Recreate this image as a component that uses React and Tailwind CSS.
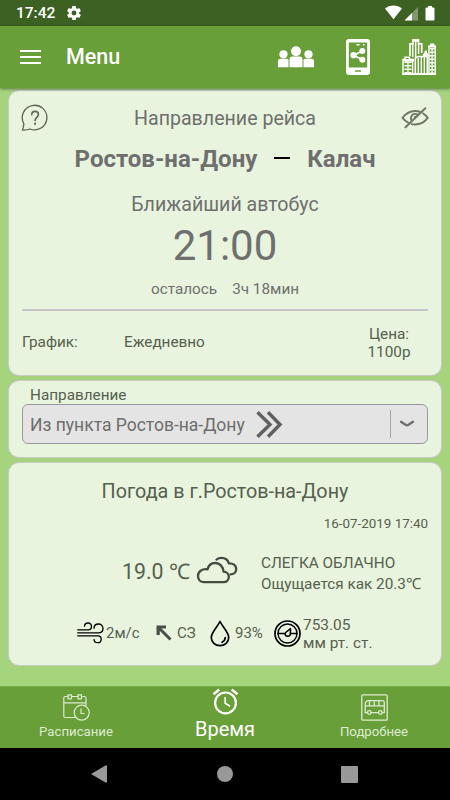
import React from "react";

const stroke = {
  fill: "none",
  stroke: "currentColor",
  strokeLinecap: "round",
  strokeLinejoin: "round",
};

/* ─── Icons ───────────────────────────────────────────── */

function GearIcon() {
  return (
    <svg className="-mt-[2px]" width="14" height="14" viewBox="2 2 20 20" fill="currentColor">
      <path d="M19.43 12.98c.04-.32.07-.64.07-.98s-.03-.66-.07-.98l2.11-1.65c.19-.15.24-.42.12-.64l-2-3.46c-.12-.22-.39-.3-.61-.22l-2.49 1c-.52-.4-1.08-.73-1.69-.98l-.38-2.65A.49.49 0 0 0 14 2h-4c-.25 0-.46.18-.49.42l-.38 2.65c-.61.25-1.17.59-1.69.98l-2.49-1c-.23-.09-.49 0-.61.22l-2 3.46c-.13.22-.07.49.12.64l2.11 1.65c-.04.32-.07.65-.07.98s.03.66.07.98l-2.11 1.65c-.19.15-.24.42-.12.64l2 3.46c.12.22.39.3.61.22l2.49-1c.52.4 1.08.73 1.69.98l.38 2.65c.03.24.24.42.49.42h4c.25 0 .46-.18.49-.42l.38-2.65c.61-.25 1.17-.59 1.69-.98l2.49 1c.23.09.49 0 .61-.22l2-3.46c.12-.22.07-.49-.12-.64l-2.11-1.65zM12 15.5a3.5 3.5 0 1 1 0-7 3.5 3.5 0 0 1 0 7z" />
    </svg>
  );
}

function StatusIcons() {
  return (
    <svg width="52" height="17" viewBox="0 0 52 17" fill="currentColor">
      <path d="M0 3.600C2.400 1.500 5.300.600 8.500.600s6.100.900 8.500 3L8.500 14.300z" />
      <path d="M19.500 15.500L33 2v13.500z" opacity=".35" />
      <path d="M19.500 15.500L27 8v7.500z" />
      <path d="M40.500 3.500q0-1 1-1h1.500V1h4v1.500h1.500q1 0 1 1v11q0 1-1 1h-7q-1 0-1-1z" />
    </svg>
  );
}

function PeopleIcon() {
  return (
    <svg width="36" height="22" viewBox="0 0 36 22" fill="currentColor">
      <circle cx="5.500" cy="8.300" r="4.100" />
      <circle cx="30.500" cy="8.300" r="4.100" />
      <path d="M0 21.200v-6.200q0-2.200 2.200-2.200h6.600q1.700 0 1.700 1.500v6.900z" />
      <path d="M36 21.200v-6.200q0-2.200-2.200-2.200h-6.600q-1.700 0-1.700 1.500v6.900z" />
      <circle cx="18" cy="5.200" r="5" />
      <path d="M11.500 21.200v-8q0-2.600 2.600-2.600h7.800q2.600 0 2.600 2.600v8z" />
    </svg>
  );
}

function PhoneShareIcon() {
  return (
    <svg width="24" height="36" viewBox="0 0 24 36">
      <rect width="24" height="36" rx="3" fill="#fff" />
      <rect x="2.800" y="3.500" width="18.400" height="25" fill="#689f38" />
      <path d="M10.500 5.700h3M17 5.700h1.500" stroke="#fff" strokeWidth="1.400" />
      <path d="M16.500 12L7.500 16.200L16.500 20.800" fill="none" stroke="#fff" strokeWidth="1.600" />
      <circle cx="16.300" cy="11.900" r="3" fill="#fff" />
      <circle cx="7.500" cy="16.200" r="3.100" fill="#fff" />
      <circle cx="16.300" cy="20.800" r="3" fill="#fff" />
      <path d="M9.500 32h5" stroke="#689f38" strokeWidth="1.300" strokeLinecap="round" />
    </svg>
  );
}

function CityIcon() {
  return (
    <svg width="34" height="36" viewBox="0 0 34 36" fill="none" stroke="#fff">
      <path d="M8 17V4.800h3V1h5.500v3.800H19.700V14" strokeWidth="1.700" />
      <path d="M10.800 5v13M13.700 1v18M16.600 5v10" strokeWidth="1.400" />
      <path d="M10.300 1.500h6.500" strokeWidth="2.400" />
      <path d="M27 35V7M33.200 7v28" strokeWidth="1.400" />
      <path d="M26.300 6.300h2V4.400h4v1.900h1.700v2.200h-7.700z" fill="#fff" stroke="none" />
      <path d="M30.100 9v26" strokeWidth="5" strokeDasharray="1.500 2" />
      <path d="M30.100 9v26" strokeWidth="1.200" />
      <path d="M13.300 35V19l3-1.500h9V35" strokeWidth="1.500" />
      <path d="M16.300 19v16M19.300 18v17M22.300 18v17" strokeWidth="1.300" />
      <path d="M21.500 17.500V15l1.500-1.200V12h1.500v1.800l1.500 1.200v2" fill="#fff" strokeWidth="1" />
      <path d="M1 35V20.500h2V18.300h4.500v2.200H12" strokeWidth="1.500" />
      <path d="M1 20h11v2.500H1z" fill="#fff" stroke="none" />
      <path d="M4 22.500v12.500M8 22.500v12.500" strokeWidth="3" strokeDasharray="1.500 2" />
      <path d="M6 22v13M10.600 22v13" strokeWidth="1.300" />
      <path d="M0 35h34" strokeWidth="1.800" />
    </svg>
  );
}

function HelpIcon() {
  return (
    <svg width="28" height="28" viewBox="0 0 28 28" strokeWidth="1.300" {...stroke}>
      <path d="M2.800 19.500A12.300 12.300 0 1 1 9 25c-2.400.9-4.800 1.200-7.600 1 .9-2 1.400-4.300 1.400-6.500z" />
      <path d="M10.800 10.800c0-2 1.400-3.400 3.200-3.400s3.400 1.300 3.400 3.200c0 2.800-3.300 2.900-3.300 6" strokeWidth="1.600" />
      <path d="M14.100 19.500v.5" strokeWidth="1.900" />
    </svg>
  );
}

function EyeOffIcon() {
  return (
    <svg width="28" height="22" viewBox="0 0 28 22" strokeWidth="1.900" {...stroke}>
      <path d="M7.500 15.800C4.800 14.500 2.900 12.700 1.500 10.900 4.500 6.900 8.800 4 14 4c2 0 3.800.4 5.400 1.200" />
      <path d="M22 6.300c1.800 1.200 3.400 2.800 4.700 4.600-3 4-7.400 6.600-12.700 6.600-1.200 0-2.300-.1-3.400-.4" />
      <path d="M10.300 12.900c-1.200-2.600.5-6 3.800-6 1 0 2 .4 2.600.9" />
      <path d="M4.500 20.300L24.300 1.300" strokeWidth="2" />
      <path d="M13.300 10.900c.1-.8.7-1.400 1.500-1.500" strokeWidth="1.200" />
    </svg>
  );
}

function CloudIcon() {
  return (
    <svg width="42" height="28" viewBox="0 0 42 28" strokeWidth="2.300" {...stroke}>
      <path d="M8 26.200h19.500c3.200 0 5.300-2.300 5.300-5.100 0-3-2.200-5.400-5.300-5.400-.4-5.200-3.800-8.700-8.200-8.700-4.200 0-6.800 2.600-7.700 6.300C5.800 12.600 2 15.500 2 20c0 3.500 2.500 6.200 6 6.200z" />
      <path d="M20.500 3.600c1.300-1.100 3-1.700 4.900-1.700 3.700 0 6.500 2 7.500 5.500 4.200-.2 7.300 1.800 7.300 5.500 0 3.400-2.500 5.500-5.700 5.500" />
    </svg>
  );
}

function WindIcon() {
  return (
    <svg width="27" height="22" viewBox="0 0 27 22" strokeWidth="1.300" {...stroke}>
      <path d="M.7 7.800h10.500c2 0 3.300-1.400 3.300-3.400s-1.400-3.400-3.400-3.400c-2.200 0-3.600 1.300-3.600 3.300" />
      <path d="M.7 10.800h20.500c2.900 0 4.800-1.700 4.800-4.300S24 2 21.500 2s-4.500 1.700-4.500 4.300" />
      <path d="M.7 13.800h20.300c2 0 3.200 1.500 3.200 3.400s-1.400 3.500-3.500 3.500-3.600-1.300-3.600-3.200" />
    </svg>
  );
}

function ArrowIcon() {
  return (
    <svg width="16" height="16" viewBox="0 0 16 16">
      <path d="M3 3L14.500 14.500" fill="none" stroke="currentColor" strokeWidth="3" />
      <path d="M.5.500h9.500v3H3.800v6.500H.5z" fill="currentColor" />
    </svg>
  );
}

function DropIcon() {
  return (
    <svg width="20" height="27" viewBox="0 0 20 27" strokeWidth="1.700" {...stroke}>
      <path d="M10 1.500C7.300 7 1.300 12 1.300 17.500c0 4.700 3.800 8.200 8.700 8.200s8.700-3.500 8.700-8.200C18.700 12 12.700 7 10 1.500z" />
      <path d="M15.300 17.500c-.1 2.300-1.300 3.900-3.300 4.700" />
    </svg>
  );
}

function GaugeIcon() {
  return (
    <svg width="27" height="27" viewBox="0 0 27 27" strokeWidth="1.700" {...stroke}>
      <circle cx="13.500" cy="13.500" r="12.500" />
      <circle cx="13.500" cy="13.500" r="9.500" strokeWidth="1.400" />
      <path d="M4 13.500h6.500M16.500 13.500H23" />
      <path d="M16.500 8.500l-.1 5.500c-.3 3-4.700 3-5.400.3-.2-2 1.500-2.600 2.600-3.300z" strokeWidth="1.500" />
    </svg>
  );
}

function ScheduleIcon() {
  return (
    <svg width="27" height="27" viewBox="0 0 27 27" strokeWidth="1.200" {...stroke}>
      <path d="M12 23.500H2.300q-1.500 0-1.500-1.500V4q0-1.500 1.500-1.500H5M8.500 2.500h6.300M18.500 2.500h3q1.500 0 1.500 1.500v7.500M1 8.800h22" />
      <rect x="5" y=".8" width="3.500" height="4" />
      <rect x="15" y=".8" width="3.500" height="4" />
      <circle cx="18.700" cy="18.700" r="7.500" />
      <path d="M18 14.800v4.700h3.200" />
    </svg>
  );
}

function ClockIcon() {
  return (
    <svg width="27" height="27" viewBox="0 0 27 27" strokeWidth="2.200" {...stroke} strokeLinecap="butt">
      <circle cx="13.500" cy="14.900" r="10.400" />
      <path d="M1.500 6.300L7.300 1.500M25.500 6.300L19.700 1.500" strokeWidth="2.500" />
      <path d="M13.200 9v6.300l4.800 3" strokeWidth="1.700" />
    </svg>
  );
}

function BusIcon() {
  return (
    <svg width="27" height="27" viewBox="0 0 27 27" strokeWidth="1.300" {...stroke}>
      <rect x=".8" y=".8" width="25.400" height="25.400" rx="1" />
      <path d="M6.500 18.700H4.200v-7.200c0-3 .9-4.800 3.100-4.800h14q2 0 2 2v10h-2M10 18.700h7.500M4.500 11.800h18.500M8.500 6.900v4.900M13.200 6.900v4.900M18 6.900v4.900" />
      <circle cx="8.300" cy="18.500" r="1.800" />
      <circle cx="19.300" cy="18.500" r="1.800" />
    </svg>
  );
}

/* ─── Layout pieces ───────────────────────────────────── */

function Card({ className, children }) {
  return (
    <section className={`rounded-[11px] border border-[#c8cbc4] bg-[#e8f4de] shadow-[0_0_1px_#b8b8b8] ${className}`}>
      {children}
    </section>
  );
}

function Tab({ icon, label, active }) {
  return (
    <button
      className={
        active
          ? "flex w-[149px] flex-col items-center pt-[2px] text-xl leading-[28px] text-white"
          : "flex w-[149px] flex-col items-center pt-[8px] text-[13.200px] leading-[22px] text-[#deebd2]"
      }
    >
      {icon}
      <span>{label}</span>
    </button>
  );
}

export default function App() {
  return (
    <div className="flex h-[800px] w-[450px] flex-col overflow-hidden bg-[#a5d47c] font-['Roboto',sans-serif] text-[#56604f]">
      {/* Status bar */}
      <div className="flex h-[26px] shrink-0 items-center bg-[#3d6023] pl-4 pr-[13px] pt-px text-white">
        <span className="w-[51px] pt-px text-[15.500px] font-medium leading-none">17:42</span>
        <GearIcon />
        <div className="ml-auto">
          <StatusIcons />
        </div>
      </div>

      {/* App bar */}
      <header className="z-10 flex h-[62px] shrink-0 items-center bg-[#689f38] pl-5 pr-[14px] text-white shadow-[0_1px_3px_rgba(0,0,0,0.45)]">
        <div className="flex w-[46px] flex-col gap-[4px]">
          <span className="h-[2px] w-[21px] bg-white"></span>
          <span className="h-[2px] w-[21px] bg-white"></span>
          <span className="h-[2px] w-[21px] bg-white"></span>
        </div>
        <h1 className="pt-px text-[21.500px] font-medium">Menu</h1>
        <div className="ml-auto flex items-center">
          <PeopleIcon />
          <div className="ml-8">
            <PhoneShareIcon />
          </div>
          <div className="ml-8">
            <CityIcon />
          </div>
        </div>
      </header>

      <main className="flex grow flex-col gap-1 px-2 pt-[2px]">
        {/* Trip */}
        <Card className="h-[286px] px-[13px] text-[#6f6f6f]">
          <div className="flex h-[54px] items-center justify-between">
            <span className="-ml-px text-[#5c6456]">
              <HelpIcon />
            </span>
            <h2 className="pt-[2px] text-[19.600px]">Направление рейса</h2>
            <span className="-mr-px text-[#6f7767]">
              <EyeOffIcon />
            </span>
          </div>
          <div className="flex h-[28px] items-center justify-center text-2xl font-bold">
            <span>Ростов-на-Дону</span>
            <span className="mx-[17px] -mt-[3px] h-[2px] w-4 bg-black"></span>
            <span>Калач</span>
          </div>
          <p className="mt-[18px] text-center text-[19.600px] leading-7">Ближайший автобус</p>
          <p className="text-center text-[42px] leading-[54px]">21:00</p>
          <p className="flex h-[32px] items-center justify-center gap-[15px] text-[15.300px]">
            <span>осталось</span>
            <span>3ч 18мин</span>
          </p>
          <div className="mt-[4px] h-[2px] bg-[#c8c6ca]"></div>
          <div className="flex h-[62px] items-center text-[15.300px] text-[#56604f]">
            <span className="w-[102px]">График:</span>
            <span>Ежедневно</span>
            <p className="ml-auto w-[78px] pt-[2px] text-center leading-[18px]">
              Цена:
              <br />
              1100р
            </p>
          </div>
        </Card>

        {/* Direction select */}
        <Card className="h-[78px] px-[13px] pt-[4px]">
          <label className="block h-[19px] pl-2 text-[15.300px] leading-[21px]">Направление</label>
          <div className="flex h-10 items-center rounded-md border border-[#98999a] bg-[#e4e4e4] pl-[7px] text-[#6d6d6d]">
            <span className="w-[226px] whitespace-nowrap pt-[2px] text-[17.500px]">Из пункта Ростов-на-Дону</span>
            <svg width="27" height="27" viewBox="0 0 27 27" fill="none" stroke="#606060" strokeWidth="3.400">
              <path d="M1.500 1.200L14 13.500L1.500 25.800M12 1.200L24 13.500L12 25.800" />
            </svg>
            <span className="ml-auto h-7 w-px bg-[#a5a5a5]"></span>
            <svg className="ml-2 mr-3" width="16" height="10" viewBox="0 0 16 10" strokeWidth="2.300" {...stroke}>
              <path d="M2 2.800L6.500 5.800Q8 6.800 9.500 5.800L14 2.800" />
            </svg>
          </div>
        </Card>

        {/* Weather */}
        <Card className="h-[204px] px-[13px]">
          <h2 className="pt-[15px] text-center text-[19.750px] leading-7">Погода в г.Ростов-на-Дону</h2>
          <p className="mt-[7px] text-right text-[13.400px] leading-[22px]">16-07-2019 17:40</p>
          <div className="flex h-[73px] items-center">
            <span className="ml-[100px] w-[74px] whitespace-nowrap text-[21.300px]">19.0 ℃</span>
            <span className="-mt-[4px] text-[#454b42]">
              <CloudIcon />
            </span>
            <div className="ml-[23px] whitespace-nowrap pt-[4px] text-[15.300px] leading-[21px]">
              <p>СЛЕГКА ОБЛАЧНО</p>
              <p>Ощущается как 20.3℃</p>
            </div>
          </div>
          <div className="mt-[3px] flex h-[44px] items-center pl-[55px] text-[15px]">
            <span className="w-[29px] text-black">
              <WindIcon />
            </span>
            <span className="w-[50px]">2м/с</span>
            <span className="w-[21px] text-[#4c4f49]">
              <ArrowIcon />
            </span>
            <span className="w-[33px]">СЗ</span>
            <span className="w-[25px] text-black">
              <DropIcon />
            </span>
            <span className="w-[39px]">93%</span>
            <span className="w-[29px] text-black">
              <GaugeIcon />
            </span>
            <p className="whitespace-nowrap pt-px text-[15.400px] leading-[18px]">
              753.05
              <br />
              мм рт. ст.
            </p>
          </div>
        </Card>
      </main>

      {/* Tabs */}
      <nav className="flex h-[62px] shrink-0 justify-center bg-[#689f38] shadow-[inset_0_1px_0_#7bab50]">
        <Tab icon={<ScheduleIcon />} label="Расписание" />
        <Tab icon={<ClockIcon />} label="Время" active />
        <Tab icon={<BusIcon />} label="Подробнее" />
      </nav>

      {/* System navigation */}
      <div className="flex h-[52px] shrink-0 items-center justify-between bg-black pl-[91px] pr-[92px] text-[#999999]">
        <svg width="16" height="18" viewBox="0 0 16 18" fill="currentColor">
          <path d="M0 9L14.500.4Q16 0 16 1.200v15.600q0 1.200-1.500.8z" />
        </svg>
        <span className="ml-px h-4 w-4 rounded-full bg-[#999999]"></span>
        <span className="h-[17px] w-[17px] rounded-[1px] bg-[#999999]"></span>
      </div>
    </div>
  );
}
